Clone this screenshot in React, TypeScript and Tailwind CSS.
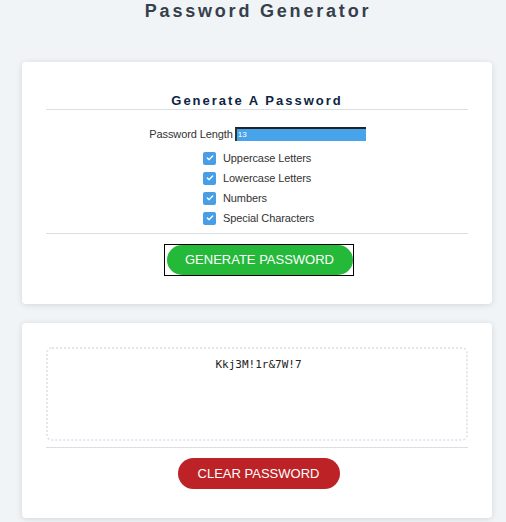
import { Check } from 'lucide-react';

const options = ['Uppercase Letters', 'Lowercase Letters', 'Numbers', 'Special Characters'];

function CheckRow({ label }: { label: string }) {
  return (
    <div className="flex items-center h-[20px] ml-[157px]">
      <span className="w-[13px] h-[13px] rounded-[2px] bg-[#489ee6] flex items-center justify-center">
        <Check className="w-[8px] h-[8px] text-white" strokeWidth={4} />
      </span>
      <span className="ml-[7px] text-[11px] leading-[14px] text-[#333] tracking-[-0.1px]">{label}</span>
    </div>
  );
}

export default function App() {
  return (
    <div className="min-h-[522px] bg-[#f0f4f7] font-['Liberation_Sans',Arial,sans-serif] pb-[10px]">
      <h1 className="text-center text-[18px] leading-[22px] font-bold tracking-[2.8px] text-[#35404b] pl-[10px]">
        Password Generator
      </h1>

      <div className="mt-[40px] ml-[22px] w-[470px] bg-white rounded-[4px] shadow-[0_1px_6px_rgba(0,0,0,0.12)] px-[24px] pt-[31px] pb-[28px]">
        <h2 className="text-center text-[13px] leading-[16px] font-bold tracking-[2px] text-[#0d2542] border-b border-[#d9dfe4]">
          Generate A Password
        </h2>

        <div className="mt-[17px] flex items-center justify-center h-[14px] pl-[1px]">
          <span className="text-[11px] leading-[14px] text-[#333] tracking-[-0.1px]">Password Length</span>
          <span className="ml-[2px] w-[131px] h-[14px] bg-[#47a3ea] border-t-2 border-l-2 border-t-[#222] border-l-[#333] text-[8px] leading-[11px] text-white pl-[1px]">
            13
          </span>
        </div>

        <div className="mt-[7px]">
          {options.map((o) => (
            <CheckRow key={o} label={o} />
          ))}
        </div>

        <div className="mt-[5px] border-t border-[#d9dfe4]" />

        <div className="mt-[10px] flex justify-center pl-[3px]">
          <div className="w-[190px] h-[32px] border border-black flex pl-[2px]">
            <button className="flex-1 rounded-full bg-[#25b93a] text-white text-[13px] leading-[30px]">
              GENERATE PASSWORD
            </button>
          </div>
        </div>
      </div>

      <div className="mt-[19px] ml-[22px] w-[470px] bg-white rounded-[4px] shadow-[0_1px_6px_rgba(0,0,0,0.12)] px-[24px] pt-[24px] pb-[29px]">
        <div className="h-[94px] border-2 border-dotted border-[#e2e6ea] rounded-[6px] pt-[9px] pl-[3px] text-center font-['DejaVu_Sans_Mono',monospace] text-[11px] leading-[14px] text-[#222]">
          Kkj3M!1r&amp;7W!7
        </div>

        <div className="mt-[6px] border-t border-[#d9dfe4]" />

        <div className="mt-[10px] flex justify-center pl-[3px]">
          <button className="w-[162px] h-[31px] rounded-full bg-[#bd2226] text-white text-[13px] leading-[31px]">
            CLEAR PASSWORD
          </button>
        </div>
      </div>
    </div>
  );
}
